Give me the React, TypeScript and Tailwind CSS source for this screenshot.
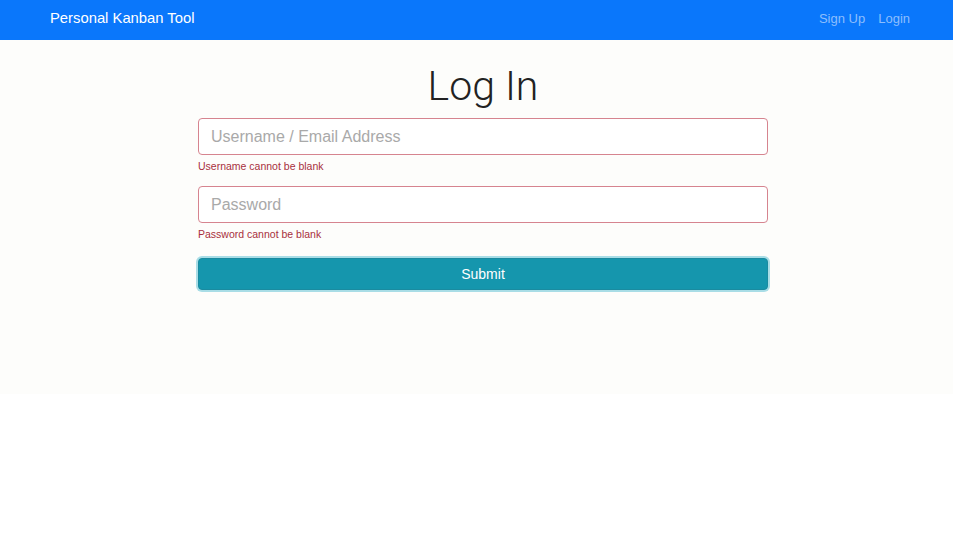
export default function App() {
  return (
    <div className="min-h-screen bg-white font-['Liberation_Sans',Arial,sans-serif]">
      <nav className="flex h-[40px] items-center justify-between bg-[#0a77fb] pb-[3px] pl-[50px] pr-[43px]">
        <span className="text-[14.8px] text-white">Personal Kanban Tool</span>
        <div className="flex gap-[13px] text-[13px] text-[#8dbefd]">
          <span>Sign Up</span>
          <span>Login</span>
        </div>
      </nav>
      <main className="h-[354px] bg-[#fdfdfb]">
        <div className="ml-[198px] w-[570px] pt-[20px]">
          <h1 className="text-center font-['Roboto',sans-serif] text-[41px] font-light leading-[52px] text-[#222]">Log In</h1>
          <form className="mt-[6px]">
            <input
              className="block h-[37px] w-full rounded-[4px] border border-[#d6848f] bg-white px-[12px] text-[16px] placeholder:text-[#a9a9a9] outline-none"
              placeholder="Username / Email Address"
            />
            <p className="mt-[3px] text-[10.5px] leading-[16px] text-[#a8303d]">Username cannot be blank</p>
            <input
              type="password"
              className="mt-[12px] block h-[37px] w-full rounded-[4px] border border-[#d6848f] bg-white px-[12px] text-[16px] placeholder:text-[#a9a9a9] outline-none"
              placeholder="Password"
            />
            <p className="mt-[3px] text-[10.5px] leading-[16px] text-[#a8303d]">Password cannot be blank</p>
            <button
              type="button"
              className="mt-[16px] block h-[32px] w-full rounded-[4px] border border-[#1a8ba0] bg-[#1596ad] text-[14px] text-white shadow-[0_0_0_2px_#a9dde6]"
            >
              Submit
            </button>
          </form>
        </div>
      </main>
    </div>
  );
}
